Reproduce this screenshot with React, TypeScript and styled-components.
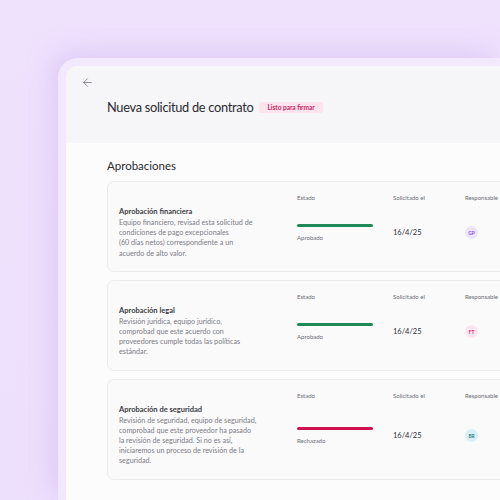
import styled, { createGlobalStyle } from "styled-components";
import { ArrowLeft } from "lucide-react";

const GlobalStyles = createGlobalStyle`
  html, body {
    margin: 0;
    height: 500px;
    overflow: hidden;
    background: linear-gradient(180deg, #efe2fd 0%, #ede0fc 100%);
    font-family: Lato, "Open Sans", sans-serif;
    -webkit-font-smoothing: antialiased;
  }
`;

const Stage = styled.div`
  box-sizing: border-box;
  height: 500px;
  padding: 58px 0 0 58px;
`;

const Frame = styled.div`
  box-sizing: border-box;
  height: 100%;
  border-top: 8px solid #f2e9fe;
  border-left: 8px solid #f2e9fe;
  border-top-left-radius: 20px;
  box-shadow: -6px -6px 28px rgba(180, 140, 230, 0.28);
`;

const Panel = styled.div`
  height: 100%;
  background: #fcfcfd;
  border-top-left-radius: 12px;
  overflow: hidden;
`;

const Header = styled.header`
  box-sizing: border-box;
  height: 77px;
  padding: 10px 0 0 15px;
  background: #f6f5f8;
`;

const BackButton = styled.button`
  display: flex;
  padding: 0;
  border: 0;
  background: none;
  color: #6f6f76;
`;

const TitleRow = styled.div`
  display: flex;
  align-items: center;
  gap: 6px;
  margin: 10px 0 0 26px;
`;

const Title = styled.h1`
  margin: 0;
  font-size: 12.8px;
  font-weight: 400;
  color: #2b2b31;
  letter-spacing: -0.3px;
`;

const Badge = styled.span`
  padding: 2px 8px;
  border-radius: 2px;
  background: #fde3ee;
  color: #c4295f;
  font-size: 6.5px;
  font-weight: 700;
`;

const Content = styled.main`
  padding: 16px 0 0 41px;
`;

const SectionTitle = styled.h2`
  margin: 0 0 9px;
  font-size: 11.5px;
  font-weight: 400;
  color: #2b2b31;
`;

const CardList = styled.div`
  display: flex;
  flex-direction: column;
  gap: 8px;
`;

const Card = styled.section`
  display: grid;
  grid-template-columns: 178px 96px 72px 1fr;
  grid-template-rows: auto 1fr;
  row-gap: 5px;
  align-items: center;
  width: 430px;
  box-sizing: border-box;
  padding: 11px 0 12px 11px;
  border: 1px solid #ebebef;
  border-radius: 7px;
  background: #fafafb;
`;

const ColLabel = styled.span<{ $col: number }>`
  grid-row: 1;
  grid-column: ${(p) => p.$col};
  font-size: 6px;
  line-height: 9px;
  color: #6a6a72;
  white-space: nowrap;
`;

const Info = styled.div`
  grid-row: 2;
  grid-column: 1;
`;

const CardTitle = styled.h3`
  margin: 0 0 1px;
  font-size: 7.5px;
  line-height: 10px;
  font-weight: 700;
  color: #3a3a40;
`;

const Description = styled.p`
  margin: 0;
  font-size: 7.2px;
  line-height: 10.2px;
  color: #7c7c84;
  white-space: nowrap;
`;

const Line = styled.span`
  display: block;
`;

const Status = styled.div`
  grid-row: 2;
  grid-column: 2;
  display: flex;
  flex-direction: column;
  gap: 6px;
`;

const Bar = styled.div<{ $color: string }>`
  width: 76px;
  height: 3px;
  border-radius: 2px;
  background: ${(p) => p.$color};
`;

const StatusText = styled.span`
  font-size: 6px;
  line-height: 9px;
  color: #6a6a72;
`;

const DateValue = styled.span`
  grid-row: 2;
  grid-column: 3;
  font-size: 7.5px;
  color: #2f2f35;
`;

const Avatar = styled.span<{ $bg: string; $fg: string }>`
  grid-row: 2;
  grid-column: 4;
  display: flex;
  align-items: center;
  justify-content: center;
  width: 13px;
  height: 13px;
  border-radius: 50%;
  background: ${(p) => p.$bg};
  color: ${(p) => p.$fg};
  font-size: 4.8px;
  font-weight: 700;
`;

const approvals = [
  {
    title: "Aprobación financiera",
    lines: [
      "Equipo financiero, revisad esta solicitud de",
      "condiciones de pago excepcionales",
      "(60 días netos) correspondiente a un",
      "acuerdo de alto valor.",
    ],
    status: "Aprobado",
    color: "#1d8a58",
    initials: "GP",
    bg: "#ece5fb",
    fg: "#8a52e4",
  },
  {
    title: "Aprobación legal",
    lines: [
      "Revisión jurídica, equipo jurídico,",
      "comprobad que este acuerdo con",
      "proveedores cumple todas las políticas",
      "estándar.",
    ],
    status: "Aprobado",
    color: "#1d8a58",
    initials: "FT",
    bg: "#fbe5f0",
    fg: "#cf2f78",
  },
  {
    title: "Aprobación de seguridad",
    lines: [
      "Revisión de seguridad, equipo de seguridad,",
      "comprobad que este proveedor ha pasado",
      "la revisión de seguridad. Si no es así,",
      "iniciaremos un proceso de revisión de la",
      "seguridad.",
    ],
    status: "Rechazado",
    color: "#cf1150",
    initials: "BR",
    bg: "#d8f0f4",
    fg: "#2e7d90",
  },
];

function App() {
  return (
    <Stage>
      <GlobalStyles />
      <Frame>
        <Panel>
          <Header>
            <BackButton aria-label="Volver">
              <ArrowLeft size={13} strokeWidth={1.4} />
            </BackButton>
            <TitleRow>
              <Title>Nueva solicitud de contrato</Title>
              <Badge>Listo para firmar</Badge>
            </TitleRow>
          </Header>
          <Content>
            <SectionTitle>Aprobaciones</SectionTitle>
            <CardList>
              {approvals.map((a) => (
                <Card key={a.title}>
                  <ColLabel $col={2}>Estado</ColLabel>
                  <ColLabel $col={3}>Solicitado el</ColLabel>
                  <ColLabel $col={4}>Responsable</ColLabel>
                  <Info>
                    <CardTitle>{a.title}</CardTitle>
                    <Description>
                      {a.lines.map((l) => (
                        <Line key={l}>{l}</Line>
                      ))}
                    </Description>
                  </Info>
                  <Status>
                    <Bar $color={a.color} />
                    <StatusText>{a.status}</StatusText>
                  </Status>
                  <DateValue>16/4/25</DateValue>
                  <Avatar $bg={a.bg} $fg={a.fg}>
                    {a.initials}
                  </Avatar>
                </Card>
              ))}
            </CardList>
          </Content>
        </Panel>
      </Frame>
    </Stage>
  );
}

export default App;
